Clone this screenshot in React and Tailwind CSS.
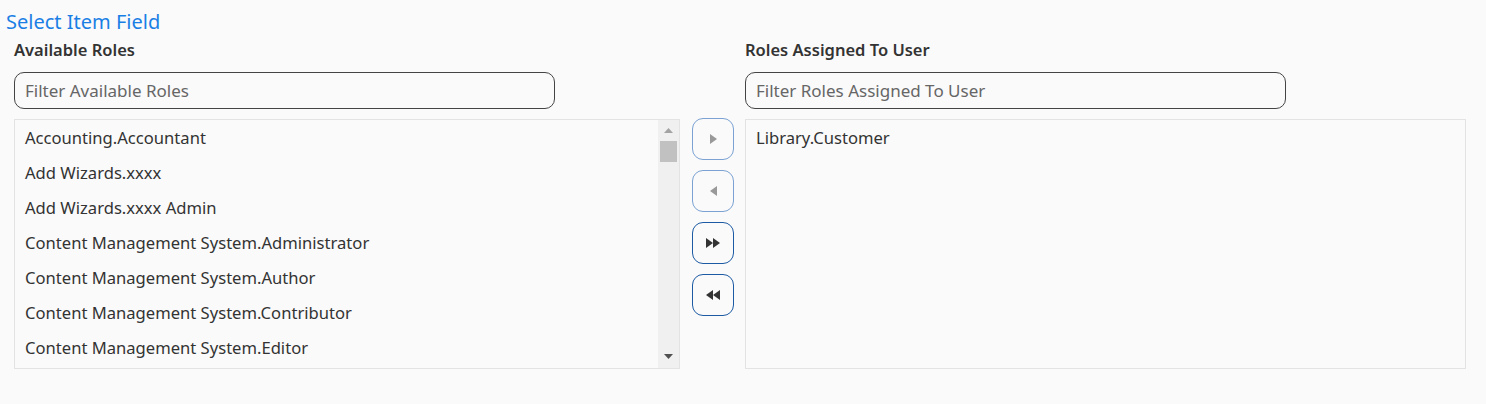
const available = [
  'Accounting.Accountant',
  'Add Wizards.xxxx',
  'Add Wizards.xxxx Admin',
  'Content Management System.Administrator',
  'Content Management System.Author',
  'Content Management System.Contributor',
  'Content Management System.Editor',
];

const assigned = ['Library.Customer'];

function Triangle({ dir }) {
  const pts = dir === 'right' ? '0,0 7,5 0,10' : '7,0 0,5 7,10';
  return (
    <svg width="7" height="10" viewBox="0 0 7 10">
      <polygon points={pts} fill="currentColor" />
    </svg>
  );
}

function MoveButton({ dir, double, enabled }) {
  return (
    <button
      className={`flex h-[42px] w-[42px] items-center justify-center rounded-[11px] border bg-[#fafafa] ${
        enabled ? 'border-[#1c5aa3] text-[#333]' : 'border-[#7ba2d2] text-[#999]'
      }`}
    >
      <Triangle dir={dir} />
      {double && <Triangle dir={dir} />}
    </button>
  );
}

function App() {
  return (
    <div className="min-h-[404px] bg-[#fafafa] font-['Noto_Sans',sans-serif] text-[#333]">
      <div className="px-[6px] pt-[8px] text-[20px] leading-[28px] text-[#1a7fe5]">Select Item Field</div>
      <div className="flex pl-[14px]">
        <div className="flex w-[666px] flex-col">
          <div className="text-[16.5px] font-semibold leading-[27px]">Available Roles</div>
          <input
            placeholder="Filter Available Roles"
            className="mt-[9px] h-[37px] w-[541px] rounded-[10px] border border-[#444] bg-[#fafafa] px-[10px] text-[17px] placeholder:text-[#666] outline-none"
          />
          <div className="mt-[10px] flex h-[250px] border border-[#e3e3e3]">
            <div className="flex-1 overflow-hidden pl-[10px]">
              {available.map((r) => (
                <div key={r} className="h-[35px] text-[16.6px] leading-[35px]">
                  {r}
                </div>
              ))}
            </div>
            <div className="flex w-[21px] flex-col items-center bg-[#f0f0f0]">
              <svg width="9" height="5" viewBox="0 0 9 5" className="mt-[8px]">
                <polygon points="0,5 4.5,0 9,5" fill="#a3a3a3" />
              </svg>
              <div className="mt-[8px] h-[21px] w-[17px] bg-[#c1c1c1]" />
              <div className="flex-1" />
              <svg width="9" height="5" viewBox="0 0 9 5" className="mb-[9px]">
                <polygon points="0,0 9,0 4.5,5" fill="#505050" />
              </svg>
            </div>
          </div>
        </div>
        <div className="ml-[12px] flex flex-col gap-[10px] pt-[82px]">
          <MoveButton dir="right" />
          <MoveButton dir="left" />
          <MoveButton dir="right" double enabled />
          <MoveButton dir="left" double enabled />
        </div>
        <div className="ml-[11px] flex w-[721px] flex-col">
          <div className="text-[16.5px] font-semibold leading-[27px]">Roles Assigned To User</div>
          <input
            placeholder="Filter Roles Assigned To User"
            className="mt-[9px] h-[37px] w-[541px] rounded-[10px] border border-[#444] bg-[#fafafa] px-[10px] text-[17px] placeholder:text-[#666] outline-none"
          />
          <div className="mt-[10px] h-[250px] border border-[#e3e3e3] pl-[10px]">
            {assigned.map((r) => (
              <div key={r} className="h-[35px] text-[16.6px] leading-[35px]">
                {r}
              </div>
            ))}
          </div>
        </div>
      </div>
    </div>
  );
}

export default App;
